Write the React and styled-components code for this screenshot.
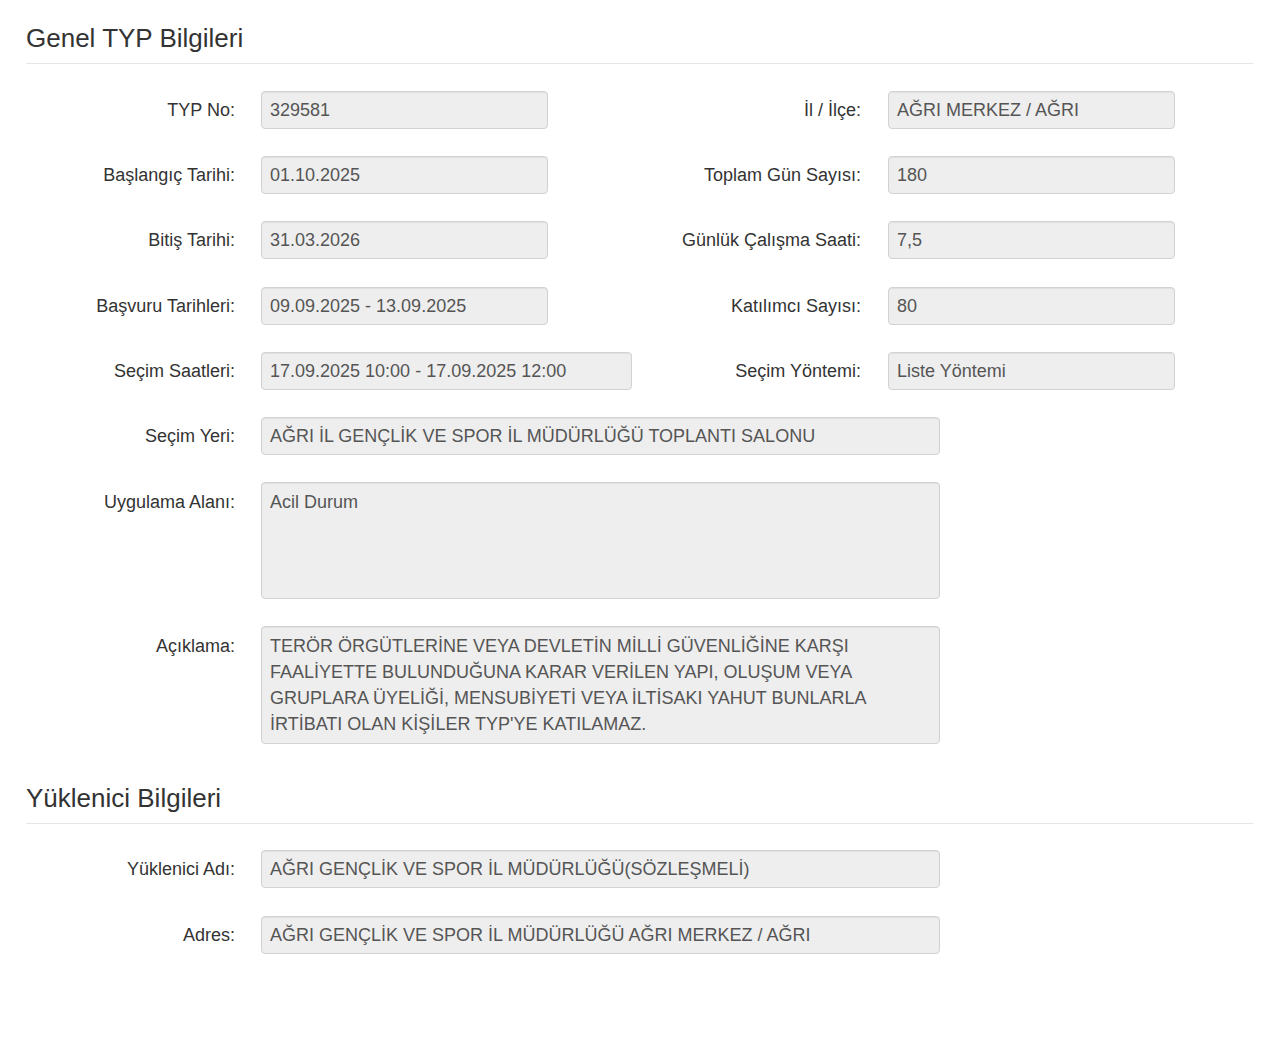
import styled, { createGlobalStyle } from "styled-components";

const GlobalStyle = createGlobalStyle`
  html, body {
    margin: 0;
    padding: 0;
    background: #fff;
  }
  body {
    font-family: "Liberation Sans", Arial, sans-serif;
    color: #333;
  }
`;

const Page = styled.div`
  padding: 0 27px 60px 26px;
`;

const SectionTitle = styled.h2`
  margin: ${props => (props.first ? "24px" : "40px")} 0 0;
  padding-bottom: 10px;
  border-bottom: 1px solid #e6e6e6;
  font-size: 26px;
  font-weight: 400;
  line-height: 29px;
  color: #333;
`;

const Form = styled.div`
  display: flex;
  flex-direction: column;
  gap: 27.2px;
  padding-top: ${props => props.top || 27}px;
`;

const Row = styled.div`
  display: flex;
  align-items: flex-start;
`;

const Field = styled.div`
  display: flex;
  align-items: ${props => (props.multi ? "flex-start" : "center")};
  gap: ${props => (props.right ? "27px" : "26px")};
  width: ${props => (props.right ? "auto" : props.wide ? "100%" : "614px")};
`;

const Label = styled.label`
  flex: none;
  width: ${props => (props.right ? "221px" : "209px")};
  text-align: right;
  font-size: 18px;
  line-height: 26px;
  color: #333;
  padding-top: ${props => (props.multi ? "7px" : "0")};
`;

const Box = styled.div`
  box-sizing: border-box;
  width: ${props => props.w}px;
  min-height: ${props => props.h || 38}px;
  padding: 6px 8px;
  background: #eeeeee;
  border: 1px solid #d2d2d2;
  border-radius: 4px;
  box-shadow: inset 0 1px 1px rgba(0, 0, 0, 0.06);
  font-size: 18px;
  line-height: 24px;
  color: #555;
  white-space: ${props => (props.multi ? "pre-line" : "nowrap")};
  ${props => props.multi && "line-height: 26px;"}
`;

const general = [
  [
    { label: "TYP No:", value: "329581" },
    { label: "İl / İlçe:", value: "AĞRI MERKEZ / AĞRI" },
  ],
  [
    { label: "Başlangıç Tarihi:", value: "01.10.2025" },
    { label: "Toplam Gün Sayısı:", value: "180" },
  ],
  [
    { label: "Bitiş Tarihi:", value: "31.03.2026" },
    { label: "Günlük Çalışma Saati:", value: "7,5" },
  ],
  [
    { label: "Başvuru Tarihleri:", value: "09.09.2025 - 13.09.2025" },
    { label: "Katılımcı Sayısı:", value: "80" },
  ],
  [
    { label: "Seçim Saatleri:", value: "17.09.2025 10:00 - 17.09.2025 12:00", w: 371 },
    { label: "Seçim Yöntemi:", value: "Liste Yöntemi" },
  ],
];

const aciklama =
  "TERÖR ÖRGÜTLERİNE VEYA DEVLETİN MİLLİ GÜVENLİĞİNE KARŞI\nFAALİYETTE BULUNDUĞUNA KARAR VERİLEN YAPI, OLUŞUM VEYA\nGRUPLARA ÜYELİĞİ, MENSUBİYETİ VEYA İLTİSAKI YAHUT BUNLARLA\nİRTİBATI OLAN KİŞİLER TYP'YE KATILAMAZ.";

const WideRow = ({ label, value, h, multi }) => (
  <Row>
    <Field wide multi={multi}>
      <Label multi={multi}>{label}</Label>
      <Box w={679} h={h} multi={multi}>
        {value}
      </Box>
    </Field>
  </Row>
);

const App = () => {
  return (
    <Page>
      <GlobalStyle />
      <SectionTitle first>Genel TYP Bilgileri</SectionTitle>
      <Form top={27}>
        {general.map(([left, right]) => (
          <Row key={left.label}>
            <Field>
              <Label>{left.label}</Label>
              <Box w={left.w || 287}>{left.value}</Box>
            </Field>
            <Field right>
              <Label right>{right.label}</Label>
              <Box w={287}>{right.value}</Box>
            </Field>
          </Row>
        ))}
        <WideRow
          label="Seçim Yeri:"
          value="AĞRI İL GENÇLİK VE SPOR İL MÜDÜRLÜĞÜ TOPLANTI SALONU"
        />
        <WideRow label="Uygulama Alanı:" value="Acil Durum" h={117} multi />
        <WideRow label="Açıklama:" value={aciklama} h={117} multi />
      </Form>

      <SectionTitle>Yüklenici Bilgileri</SectionTitle>
      <Form top={26}>
        <WideRow
          label="Yüklenici Adı:"
          value="AĞRI GENÇLİK VE SPOR İL MÜDÜRLÜĞÜ(SÖZLEŞMELİ)"
        />
        <WideRow
          label="Adres:"
          value="AĞRI GENÇLİK VE SPOR İL MÜDÜRLÜĞÜ AĞRI MERKEZ / AĞRI"
        />
      </Form>
    </Page>
  );
};

export default App;
